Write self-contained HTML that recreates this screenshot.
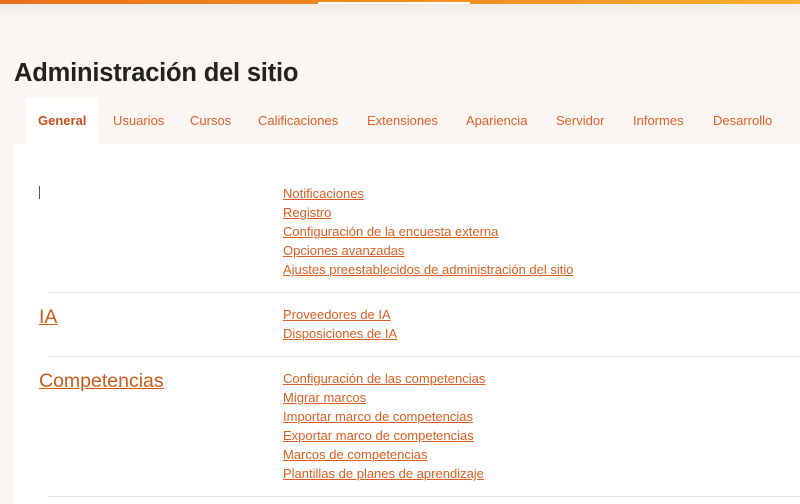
<!DOCTYPE html>
<html><head><meta charset="utf-8"><style>
*{margin:0;padding:0;box-sizing:border-box}
body{width:800px;height:500px;overflow:hidden;background:#fcf6f2;font-family:"Liberation Sans",sans-serif;position:relative}
.top{position:absolute;left:0;top:0;width:800px;height:4px;background:linear-gradient(90deg,#e8701a,#f08a1c 50%,#f5b02e)}
.top i{position:absolute;left:318px;top:2px;width:152px;height:2px;background:#fff}
.shadow{position:absolute;left:0;top:4px;width:800px;height:14px;background:linear-gradient(#f1ebe7,#fcf6f2)}
h1{position:absolute;left:14px;top:59px;font-size:25.5px;font-weight:bold;color:#222;letter-spacing:-0.2px}
.tab{position:absolute;top:113px;font-size:13px;color:#e0612a}
.act{position:absolute;left:26px;top:98px;width:72px;height:50px;background:#fff}
.card{position:absolute;left:14px;top:144px;width:790px;height:360px;background:#fff}
a{color:#dc5f22;text-decoration:underline;position:absolute;font-size:13px}
.h{font-size:19.5px;color:#d05a1a}
.hr{position:absolute;left:48px;width:752px;height:1px;background:#e2e0de}
</style></head><body>
<div class="top"><i></i></div><div class="shadow"></div>
<h1>Administración del sitio</h1>
<div class="act"></div>
<div class="card"></div>
<span class="tab" style="left:38px;font-weight:bold;color:#c4521e">General</span>
<span class="tab" style="left:113px">Usuarios</span>
<span class="tab" style="left:190px">Cursos</span>
<span class="tab" style="left:258px">Calificaciones</span>
<span class="tab" style="left:367px">Extensiones</span>
<span class="tab" style="left:466px">Apariencia</span>
<span class="tab" style="left:556px">Servidor</span>
<span class="tab" style="left:633px">Informes</span>
<span class="tab" style="left:713px">Desarrollo</span>
<div style="position:absolute;left:39px;top:186px;width:1px;height:13px;background:#555"></div>
<a style="left:283px;top:186px">Notificaciones</a>
<a style="left:283px;top:205px">Registro</a>
<a style="left:283px;top:224px">Configuración de la encuesta externa</a>
<a style="left:283px;top:243px">Opciones avanzadas</a>
<a style="left:283px;top:262px">Ajustes preestablecidos de administración del sitio</a>
<div class="hr" style="top:292px"></div>
<a class="h" style="left:39px;top:306px">IA</a>
<a style="left:283px;top:307px">Proveedores de IA</a>
<a style="left:283px;top:326px">Disposiciones de IA</a>
<div class="hr" style="top:356px"></div>
<a class="h" style="left:39px;top:370px">Competencias</a>
<a style="left:283px;top:371px">Configuración de las competencias</a>
<a style="left:283px;top:390px">Migrar marcos</a>
<a style="left:283px;top:409px">Importar marco de competencias</a>
<a style="left:283px;top:428px">Exportar marco de competencias</a>
<a style="left:283px;top:447px">Marcos de competencias</a>
<a style="left:283px;top:466px">Plantillas de planes de aprendizaje</a>
<div class="hr" style="top:496px"></div>
</body></html>
